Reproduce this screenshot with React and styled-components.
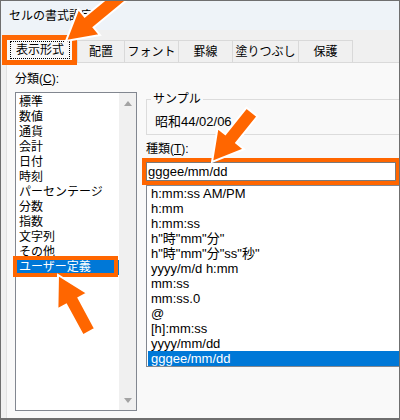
import React from 'react'
import styled, { createGlobalStyle } from 'styled-components'

const GlobalStyle = createGlobalStyle`
  html, body { margin: 0; padding: 0; background: #fff; }
  body { font-family: "Liberation Sans", "Noto Sans CJK JP", sans-serif; color: #000; }
`

const tabs = [
  { label: '表示形式', width: 65, active: true },
  { label: '配置', width: 48 },
  { label: 'フォント', width: 54 },
  { label: '罫線', width: 54 },
  { label: '塗りつぶし', width: 66 },
  { label: '保護', width: 54 },
]

const categories = [
  '標準', '数値', '通貨', '会計', '日付', '時刻', 'パーセンテージ',
  '分数', '指数', '文字列', 'その他', 'ユーザー定義',
]

const formats = [
  'h:mm:ss AM/PM', 'h:mm', 'h:mm:ss', 'h"時"mm"分"', 'h"時"mm"分"ss"秒"',
  'yyyy/m/d h:mm', 'mm:ss', 'mm:ss.0', '@', '[h]:mm:ss', 'yyyy/mm/dd', 'gggee/mm/dd',
]

const ORANGE = '#ff6600'

function arrowPoints(tail, tip, w = 14, L = 30, H = 34) {
  const dx = tip[0] - tail[0]
  const dy = tip[1] - tail[1]
  const len = Math.hypot(dx, dy)
  const ux = dx / len
  const uy = dy / len
  const nx = -uy
  const ny = ux
  const bx = tip[0] - ux * L
  const by = tip[1] - uy * L
  const p = (x, y, k) => [x + nx * k, y + ny * k]
  return [
    p(tail[0], tail[1], w / 2),
    p(bx, by, w / 2),
    p(bx, by, H / 2),
    tip,
    p(bx, by, -H / 2),
    p(bx, by, -w / 2),
    p(tail[0], tail[1], -w / 2),
  ]
    .map((q) => q[0].toFixed(1) + ',' + q[1].toFixed(1))
    .join(' ')
}

function Arrows() {
  return (
    <Overlay viewBox="0 0 400 420" width="400" height="420">
      {[
        [[128, -10], [66, 41]],
        [[252, 112], [212, 162]],
        [[89, 332], [58, 275]],
      ].map(([tail, tip], i) => (
        <polygon
          key={i}
          points={arrowPoints(tail, tip)}
          fill={ORANGE}
          stroke="#fff"
          strokeWidth="2"
        />
      ))}
    </Overlay>
  )
}

export default function App() {
  return (
    <>
      <GlobalStyle />
      <Window>
        <TitleBar>セルの書式設定</TitleBar>
        <TabStrip>
          {tabs.map((t) =>
            t.active ? (
              <ActiveTab key={t.label} $w={t.width}>
                <FocusRect>{t.label}</FocusRect>
              </ActiveTab>
            ) : (
              <Tab key={t.label} $w={t.width}>
                {t.label}
              </Tab>
            )
          )}
        </TabStrip>
        <Panel>
          <LeftColumn>
            <Label>
              分類(<u>C</u>):
            </Label>
            <CategoryBox>
              <CategoryItems>
                {categories.map((c, i) => (
                  <CategoryItem key={c} $selected={i === categories.length - 1}>
                    {c}
                  </CategoryItem>
                ))}
              </CategoryItems>
              <ScrollBar>
                <ScrollArrow $dir="up" />
                <ScrollArrow $dir="down" />
              </ScrollBar>
            </CategoryBox>
          </LeftColumn>
          <RightColumn>
            <SampleGroup>
              <SampleLegend>サンプル</SampleLegend>
              <SampleText>昭和44/02/06</SampleText>
            </SampleGroup>
            <TypeLabel>
              種類(<u>T</u>):
            </TypeLabel>
            <FormatInput $marked>gggee/mm/dd</FormatInput>
            <FormatList>
              {formats.map((f, i) => (
                <FormatItem key={f} $selected={i === formats.length - 1}>
                  {f}
                </FormatItem>
              ))}
            </FormatList>
          </RightColumn>
        </Panel>
        <Arrows />
      </Window>
    </>
  )
}

const Window = styled.div`
  position: relative;
  width: 400px;
  height: 420px;
  box-sizing: border-box;
  border: 1px solid #6f6f6f;
  border-bottom-width: 2px;
  background: #f0f0f0;
  overflow: hidden;
  display: flex;
  flex-direction: column;
`
const TitleBar = styled.div`
  flex: none;
  height: 29px;
  padding-left: 8px;
  display: flex;
  align-items: center;
  background: #eef3f8;
  font-size: 12px;
  line-height: 14px;
`
const TabStrip = styled.div`
  flex: none;
  height: 32px;
  padding-left: 6px;
  display: flex;
  align-items: flex-end;
`
const Tab = styled.div`
  width: ${(p) => p.$w}px;
  height: 22px;
  box-sizing: border-box;
  border: 1px solid #d9d9d9;
  border-bottom: none;
  border-left-width: 0;
  &:nth-child(2) {
    border-left-width: 1px;
  }
  display: flex;
  align-items: center;
  justify-content: center;
  font-size: 12px;
  line-height: 14px;
`
const ActiveTab = styled.div`
  width: ${(p) => p.$w}px;
  height: 20px;
  margin: 0 5px 2px 0;
  box-sizing: border-box;
  background: #f9f9f9;
  outline: 5px solid ${ORANGE};
  display: flex;
  align-items: stretch;
  justify-content: center;
  padding: 1px 2px 1px 3px;
  font-size: 12px;
  line-height: 14px;
  position: relative;
  z-index: 1;
`
const FocusRect = styled.span`
  flex: 1;
  display: flex;
  align-items: center;
  justify-content: center;
  border: 1px dotted #000;
`
const Panel = styled.div`
  flex: 1;
  margin-left: 5px;
  background: #f9f9f9;
  border-top: 1px solid #dadada;
  border-left: 1px solid #e2e2e2;
  padding-left: 8px;
  display: flex;
  gap: 9px;
  min-height: 0;
`
const LeftColumn = styled.div`
  flex: none;
  width: 122px;
  padding-top: 9px;
  display: flex;
  flex-direction: column;
`
const Label = styled.div`
  font-size: 12px;
  line-height: 15px;
  height: 15px;
`
const CategoryBox = styled.div`
  margin-top: 5px;
  height: 319px;
  box-sizing: border-box;
  border: 1px solid #828790;
  background: #fff;
  display: flex;
`
const CategoryItems = styled.div`
  flex: 1;
  padding-top: 2px;
`
const CategoryItem = styled.div`
  position: relative;
  padding-left: 3px;
  font-size: 12px;
  line-height: 15px;
  height: 15px;
  white-space: nowrap;
  background: ${(p) => (p.$selected ? '#0078d7' : 'transparent')};
  color: ${(p) => (p.$selected ? '#fff' : '#000')};
  &::after {
    content: '';
    display: ${(p) => (p.$selected ? 'block' : 'none')};
    position: absolute;
    left: -3px;
    right: 1px;
    top: -4px;
    bottom: -2px;
    border: 4px solid ${ORANGE};
  }
`
const ScrollBar = styled.div`
  flex: none;
  width: 17px;
  background: #f0f0f0;
  padding: 8px 0 7px;
  display: flex;
  flex-direction: column;
  justify-content: space-between;
  align-items: center;
`
const ScrollArrow = styled.span`
  width: 0;
  height: 0;
  border-left: 4.5px solid transparent;
  border-right: 4.5px solid transparent;
  ${(p) =>
    p.$dir === 'up'
      ? 'border-bottom: 5px solid #a3a3a3;'
      : 'border-top: 5px solid #a3a3a3;'}
`
const RightColumn = styled.div`
  flex: none;
  width: 262px;
  display: flex;
  flex-direction: column;
`
const SampleGroup = styled.fieldset`
  margin: 29px 0 0;
  padding: 8px 0 5px 4px;
  border: 1px solid #dcdcdc;
  min-width: 0;
`
const SampleLegend = styled.legend`
  padding: 0 2px;
  font-size: 12px;
  line-height: 14px;
`
const SampleText = styled.div`
  padding-left: 4px;
  font-size: 13px;
  line-height: 15px;
  height: 15px;
  white-space: nowrap;
`
const TypeLabel = styled(Label)`
  margin-top: 7px;
`
const FormatInput = styled.div`
  margin-top: 5px;
  width: 250px;
  height: 19px;
  box-sizing: border-box;
  border: 1px solid #7a7a7a;
  background: #fff;
  padding-left: 1px;
  font-size: 13px;
  line-height: 17px;
  outline: ${(p) => (p.$marked ? `4px solid ${ORANGE}` : 'none')};
  position: relative;
  z-index: 1;
`
const FormatList = styled.div`
  margin-top: 4px;
  border: 1px solid #828790;
  background: #fff;
`
const FormatItem = styled.div`
  margin-left: 1px;
  padding-left: 3px;
  font-size: 13px;
  line-height: 15px;
  height: 15px;
  white-space: nowrap;
  background: ${(p) => (p.$selected ? '#0078d7' : 'transparent')};
  color: ${(p) => (p.$selected ? '#fff' : '#000')};
`
const Overlay = styled.svg`
  position: absolute;
  left: -1px;
  top: -1px;
  pointer-events: none;
  z-index: 2;
`
